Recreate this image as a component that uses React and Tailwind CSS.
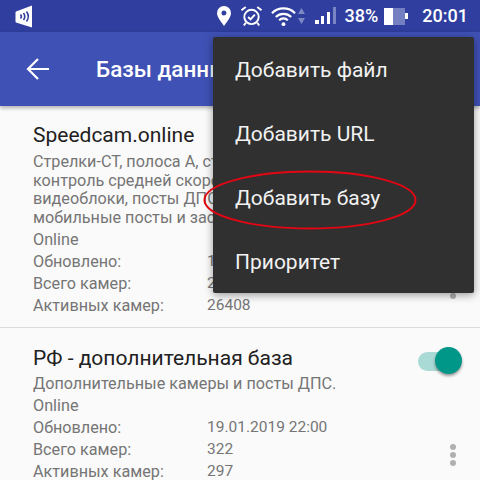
const rowClass = "flex h-[22px] items-center";

const InfoRow = ({ label, value }) => (
  <div className={rowClass}>
    <span className="w-[174px] shrink-0">{label}</span>
    <span className="text-[15.500px]">{value}</span>
  </div>
);

const StatusBar = () => (
  <div className="flex h-8 items-center bg-[#303f9f] pl-[15px] pr-[12px] text-white">
    <svg width="18" height="23" viewBox="0 0 18 23">
      <path d="M1 6.500 17 .5v22L1 17.500a1 1 0 0 1-.5-1V7.500a1 1 0 0 1 .5-1z" fill="#fff" />
      <path d="M5.500 9.500a3 3 0 0 1 0 4M8.500 8a6 6 0 0 1 0 7M11.500 6.500a8.500 8.500 0 0 1 0 10" fill="none" stroke="#303f9f" strokeWidth="1.600" />
    </svg>
    <div className="ml-auto flex items-center">
      <svg width="14" height="20" viewBox="0 0 14 20">
        <path fillRule="evenodd" d="M7 0a7 7 0 0 1 7 7c0 4.500-5 10-7 13-2-3-7-8.500-7-13a7 7 0 0 1 7-7zm0 4.500a2.500 2.500 0 1 0 0 5 2.500 2.500 0 0 0 0-5z" fill="#fff" />
      </svg>
      <svg className="ml-[9px]" width="23" height="22" viewBox="0 0 24 22" fill="none" stroke="#fff" strokeWidth="2">
        <circle cx="12" cy="12" r="7.500" />
        <path d="M8.500 12l2.500 2.500 4.500-5" />
        <path d="M1.500 5 6 1.500M22.500 5 18 1.500M6 18l-2 3M18 18l2 3" />
      </svg>
      <svg className="ml-[8px]" width="25" height="21" viewBox="0 0 26 21" fill="none" stroke="#fff" strokeWidth="2.200">
        <path d="M1 7a17 17 0 0 1 24 0M5 11a11.500 11.500 0 0 1 16 0M8.500 14.500a6 6 0 0 1 9 0" />
        <circle cx="13" cy="18.500" r="2" fill="#fff" stroke="none" />
      </svg>
      <svg className="ml-[2px]" width="7" height="17" viewBox="0 0 7 17" fill="#7c88c4">
        <path d="M3.500 0 7 6H0zM0 10h7l-3.500 6z" />
      </svg>
      <svg className="ml-[10px]" width="22" height="18" viewBox="0 0 22 18">
        <rect x="0" y="13" width="4" height="4" fill="#fff" />
        <rect x="6" y="9" width="3" height="8" fill="#fff" />
        <rect x="12" y="5" width="3" height="12" fill="#fff" />
        <rect x="18" y="0" width="3" height="17" fill="#7a86c4" />
      </svg>
      <span className="ml-[8px] text-[18px] font-medium leading-none">38%</span>
      <div className="ml-[6px] flex items-center">
        <div className="flex h-[17px] w-[21px] bg-[#7480c2]">
          <div className="h-full w-[9px] bg-white" />
        </div>
        <div className="h-[6px] w-[3px] bg-white" />
      </div>
      <span className="ml-[14px] text-[18px] font-medium leading-none">20:01</span>
    </div>
  </div>
);

const Toolbar = () => (
  <div className="relative z-10 flex h-[74px] items-center bg-[#3f51b5] pl-[26px] text-white shadow-[0_2px_4px_rgba(0,0,0,0.3)]">
    <svg width="24" height="24" viewBox="0 0 24 24" fill="none" stroke="#fff" strokeWidth="2.200">
      <path d="M23 12H2M12 2 2 12l10 10" />
    </svg>
    <span className="ml-[46px] whitespace-nowrap pt-[2px] text-[22.500px] font-medium">Базы данных</span>
  </div>
);

const Toggle = () => (
  <div className="relative h-[28px] w-[44px]">
    <div className="absolute left-0 top-[5px] h-[19px] w-[36px] rounded-full bg-[#a9dad5]" />
    <div className="absolute left-[17px] top-0 h-[27px] w-[27px] rounded-full bg-[#009688] shadow-[0_2px_3px_rgba(0,0,0,0.4)]" />
  </div>
);

const Dots = () => (
  <div className="flex flex-col gap-[2px]">
    <div className="h-[6px] w-[6px] rounded-full bg-[#b0b0b0]" />
    <div className="h-[6px] w-[6px] rounded-full bg-[#b0b0b0]" />
    <div className="h-[6px] w-[6px] rounded-full bg-[#b0b0b0]" />
  </div>
);

const Menu = () => (
  <div className="absolute left-[213px] top-[37px] z-20 w-[261px] rounded-[2px] bg-[#303030] text-[21px] text-[#f2f2f2] shadow-[0_2px_8px_rgba(0,0,0,0.4)]">
    {["Добавить файл", "Добавить URL", "Добавить базу", "Приоритет"].map((item) => (
      <div key={item} className="flex h-[64px] items-center pl-[22px] pt-[3px]">{item}</div>
    ))}
  </div>
);

const App = () => (
  <div className="relative h-[480px] w-[480px] overflow-hidden bg-[#fafafa] font-['Roboto',sans-serif]">
    <StatusBar />
    <Toolbar />

    <div className="relative h-[222px] border-b border-[#dcdcdc] pl-[33px] pr-[24px] pt-[15px] text-[16.200px] text-[#757575]">
      <div className="text-[21px] leading-[28px] text-[#212121]">Speedcam.online</div>
      <div className="mt-[4px] whitespace-nowrap leading-[18.700px]">
        <div>Стрелки-СТ, полоса А, стационарные камеры,</div>
        <div>контроль средней скорости, камеры на светофорах,</div>
        <div>видеоблоки, посты ДПС, муляжи камер,</div>
        <div>мобильные посты и засады</div>
      </div>
      <div className="mt-[1px]">
        <div className={rowClass}>Online</div>
        <InfoRow label="Обновлено:" value="19.01.2019 22:00" />
        <InfoRow label="Всего камер:" value="26912" />
        <InfoRow label="Активных камер:" value="26408" />
      </div>
      <div className="absolute right-[18px] top-[19px]"><Toggle /></div>
      <div className="absolute right-[24px] top-[171px]"><Dots /></div>
    </div>

    <div className="relative pl-[33px] pr-[24px] pt-[16px] text-[16.200px] text-[#757575]">
      <div className="text-[21px] leading-[28px] text-[#212121]">РФ - дополнительная база</div>
      <div className="mt-[2px] leading-[20px]">Дополнительные камеры и посты ДПС.</div>
      <div className="mt-[1px]">
        <div className={rowClass}>Online</div>
        <InfoRow label="Обновлено:" value="19.01.2019 22:00" />
        <InfoRow label="Всего камер:" value="322" />
        <InfoRow label="Активных камер:" value="297" />
      </div>
      <div className="absolute right-[18px] top-[19px]"><Toggle /></div>
      <div className="absolute right-[24px] top-[116px]"><Dots /></div>
    </div>

    <Menu />

    <svg className="absolute left-[202px] top-[169px] z-30" width="216" height="62" viewBox="0 0 216 62" fill="none">
      <ellipse cx="108" cy="31" rx="105.500" ry="28.500" stroke="#e30613" strokeWidth="2" />
    </svg>
  </div>
);

export default App;
